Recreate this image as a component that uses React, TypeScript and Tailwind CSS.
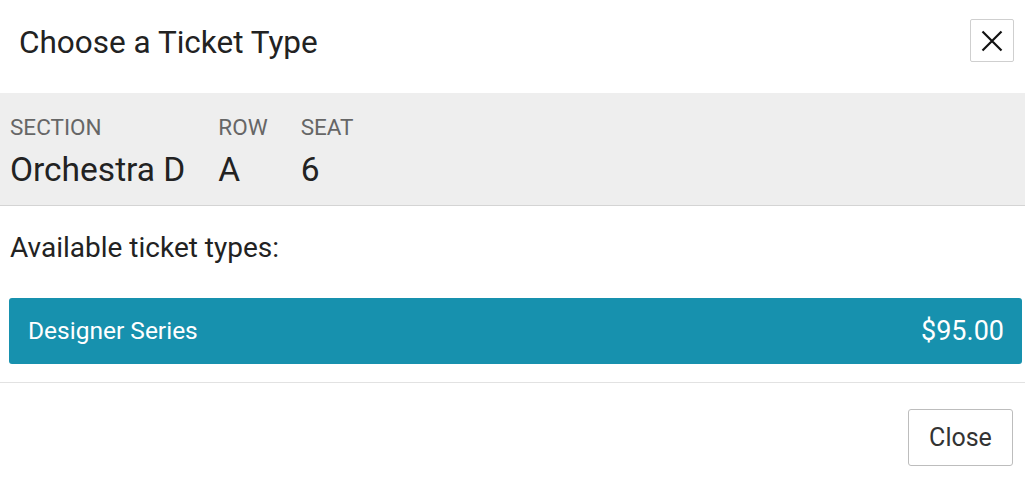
import React from "react";

export default function App() {
  return (
    <div
      className="w-[1025px] h-[484px] bg-white overflow-hidden"
      style={{ fontFamily: "Roboto, 'Liberation Sans', sans-serif" }}
    >
      {/* Header */}
      <div className="h-[93px] flex items-start justify-between pl-[19px] pr-[11px]">
        <h1 className="mt-[25px] text-[31.5px] leading-[36px] text-[#222] font-normal">Choose a Ticket Type</h1>
        <button className="mt-[19px] w-[44px] h-[43px] border border-[#cfcfcf] rounded-[2px] flex items-center justify-center bg-white">
          <svg width="22" height="22" viewBox="0 0 22 22" fill="none">
            <path d="M1.5 1.5L20.5 20.5M20.5 1.5L1.5 20.5" stroke="#111" strokeWidth="2.2" />
          </svg>
        </button>
      </div>

      {/* Seat info */}
      <div className="h-[113px] bg-[#eeeeee] border-b border-[#d4d4d4] px-[10px] pt-[21px] flex gap-[33px]">
        <div className="flex flex-col gap-[11px]">
          <div className="text-[22.5px] leading-[26px] text-[#666]">SECTION</div>
          <div className="text-[33.5px] leading-[38px] text-[#222]">Orchestra D</div>
        </div>
        <div className="flex flex-col gap-[11px]">
          <div className="text-[22.5px] leading-[26px] text-[#666]">ROW</div>
          <div className="text-[33.5px] leading-[38px] text-[#222]">A</div>
        </div>
        <div className="flex flex-col gap-[11px]">
          <div className="text-[22.5px] leading-[26px] text-[#666]">SEAT</div>
          <div className="text-[33.5px] leading-[38px] text-[#222]">6</div>
        </div>
      </div>

      {/* Body */}
      <div className="pt-[26px]">
        <div className="px-[10px] text-[28px] leading-[32px] text-[#222]">Available ticket types:</div>
        <button className="mt-[34px] ml-[9px] mr-[3px] w-[1013px] h-[66px] bg-[#1791ae] rounded-[3px] flex items-center justify-between pl-[19px] pr-[18px] text-white">
          <span className="text-[24.5px] leading-[30px]">Designer Series</span>
          <span className="text-[27px] leading-[32px]">$95.00</span>
        </button>
        <div className="mt-[18px] border-t border-[#e2e2e2]" />
      </div>

      {/* Footer */}
      <div className="flex justify-end pr-[12px] pt-[26px]">
        <button className="w-[105px] h-[57px] border border-[#bdbdbd] rounded-[3px] bg-white text-[25px] leading-[30px] text-[#333]">
          Close
        </button>
      </div>
    </div>
  );
}
